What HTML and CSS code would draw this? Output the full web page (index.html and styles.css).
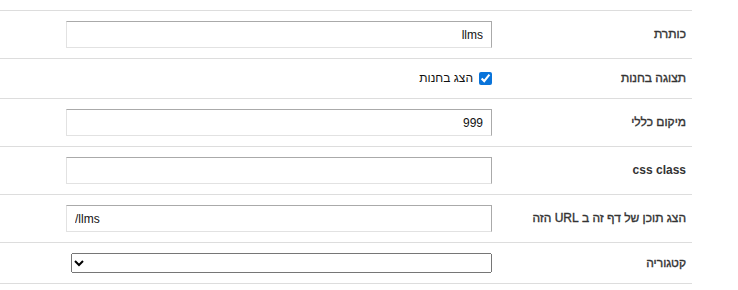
FILE: index.html
```html
<!DOCTYPE html>
<html lang="he" dir="rtl">
<head>
    <meta charset="UTF-8">
    <title>הגדרות דף</title>
    <link rel="stylesheet" href="styles.css">
</head>
<body>
    <div class="settings">
        <div class="row">
            <label class="label" for="title">כותרת</label>
            <div class="field"><input type="text" id="title" class="text" value="llms"></div>
        </div>
        <div class="row">
            <div class="label">תצוגה בחנות</div>
            <div class="field">
                <label class="check"><input type="checkbox" checked> הצג בחנות</label>
            </div>
        </div>
        <div class="row">
            <label class="label" for="order">מיקום כללי</label>
            <div class="field"><input type="text" id="order" class="text" value="999"></div>
        </div>
        <div class="row">
            <label class="label" for="cssClass"><span class="en">css class</span></label>
            <div class="field"><input type="text" id="cssClass" class="text" dir="ltr" value=""></div>
        </div>
        <div class="row">
            <label class="label" for="url">הצג תוכן של דף זה ב URL הזה</label>
            <div class="field"><input type="text" id="url" class="text" dir="ltr" value="/llms"></div>
        </div>
        <div class="row">
            <label class="label" for="category">קטגוריה</label>
            <div class="field"><select id="category" class="select"><option></option></select></div>
        </div>
    </div>
</body>
</html>
```

FILE: styles.css
```css
body {
    margin: 0;
    padding-top: 10px;
    font-family: 'Liberation Sans', Arial, sans-serif;
    font-size: 13px;
    color: #222;
    background: #fff;
}
.settings {
    width: 692px;
    margin-left: 0;
    margin-right: auto;
    border-top: 1px solid #ddd;
}
.row {
    display: grid;
    grid-template-columns: 200px 1fr;
    align-items: center;
    padding: 10px 0;
    border-bottom: 1px solid #ddd;
    min-height: 19px;
}
.label {
    padding-right: 6px;
    font-size: 12px;
    color: #333;
    -webkit-text-stroke: 0.35px #333;
    line-height: 19px;
}
.label .en {
    font-size: 12px;
    font-weight: bold;
    -webkit-text-stroke: 0;
}
.field {
    padding-left: 67px;
    display: flex;
}
.text {
    box-sizing: border-box;
    width: 426px;
    height: 27px;
    margin: 0;
    padding: 0 8px;
    border: 1px solid;
    border-color: #aaa #aaa #e2e2e2 #e2e2e2;
    font-family: 'Liberation Sans', Arial, sans-serif;
    font-size: 12px;
    color: #111;
    outline: none;
}
.check {
    display: flex;
    align-items: center;
    gap: 6px;
    font-size: 12px;
    color: #111;
    line-height: 19px;
}
.check input {
    margin: 0;
    width: 13px;
    height: 13px;
    accent-color: #0a74da;
}
.select {
    box-sizing: border-box;
    width: 421px;
    height: 20px;
    margin: 0;
    font-size: 12px;
}
```
